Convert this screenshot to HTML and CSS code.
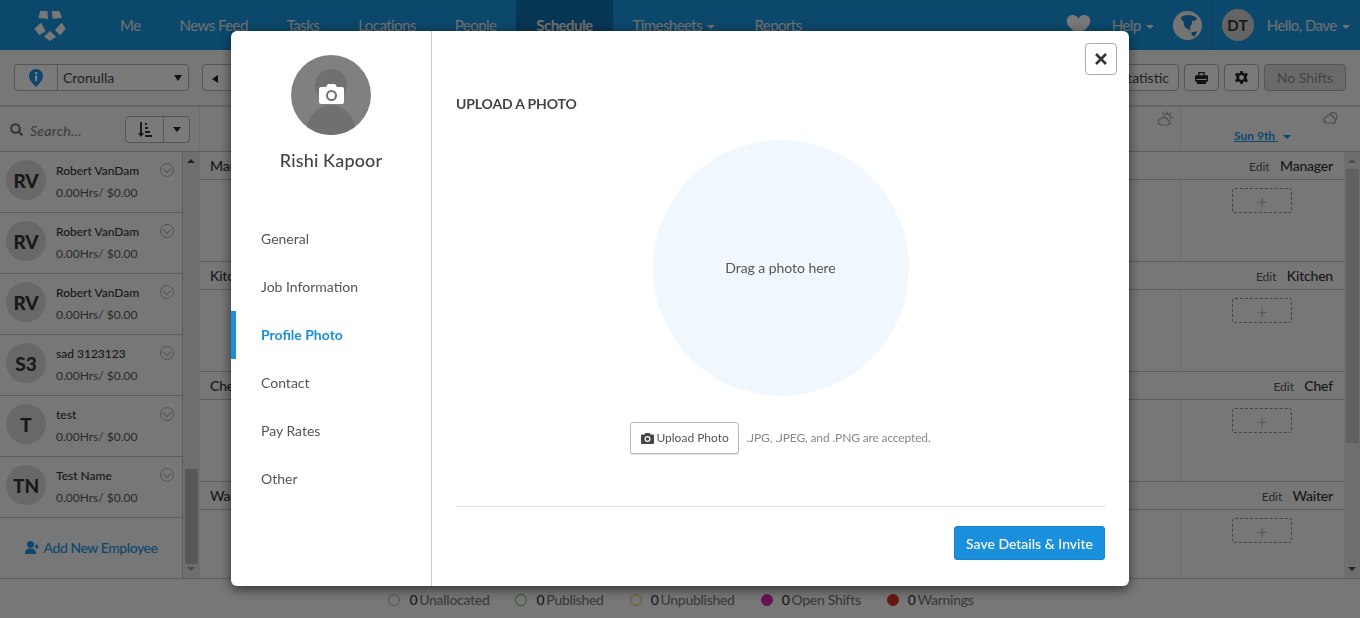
FILE: index.html
```html
<!DOCTYPE html>
<html lang="en">

<head>
    <meta charset="UTF-8">
    <meta name="viewport" content="width=device-width, initial-scale=1.0">
    <title>Schedule</title>
    <link rel="stylesheet" href="styles.css">
</head>

<body>
    <div class="page">
        <header class="topbar">
            <svg class="logo" width="32" height="30" viewBox="0 0 32 30">
                <polygon points="6,0 13.500,0 14,8 4.500,7" />
                <polygon points="17.700,0 25.300,0 28,6.700 18.700,7.700" />
                <polygon points="0.300,17.700 7,11.700 11.700,20 5.300,24.300" />
                <polygon points="21,19 27.700,11.700 31.700,17.700 26,24.300" />
                <polygon points="16,20 22,25.700 16,30 10,25.700" />
            </svg>
            <nav class="mainnav">
                <a>Me</a>
                <a>News Feed</a>
                <a>Tasks</a>
                <a>Locations</a>
                <a>People</a>
                <a class="active">Schedule</a>
                <a>Timesheets <i class="caret"></i></a>
                <a>Reports</a>
            </nav>
            <div class="topright">
                <svg class="heart" width="25" height="20" viewBox="0 0 26 22">
                    <path d="M13 22 C9 18 0 13 0 6.500 C0 2.500 3 0 6.500 0 C9.500 0 11.800 1.500 13 4 C14.200 1.500 16.500 0 19.500 0 C23 0 26 2.500 26 6.500 C26 13 17 18 13 22Z" />
                </svg>
                <a class="help">Help <i class="caret"></i></a>
                <svg class="globe" width="29" height="29" viewBox="0 0 30 30">
                    <circle cx="15" cy="15" r="15" fill="#e8e8e8" />
                    <path d="M8 7 C11 3 21 3 25 8 C23 10 21 11 19 9.500 L20 13 C18 15 17 17 18 20 C14 18.500 11 16 11 13 C12.500 10.500 8.500 10.500 8 7Z M19 22 L25 21 L22.500 26.500 L19.500 25Z" fill="#147fc4" />
                </svg>
                <div class="userbox">
                    <span class="useravatar">DT</span>
                    <a class="hello">Hello, Dave <i class="caret"></i></a>
                </div>
            </div>
        </header>

        <div class="toolbar">
            <div class="locpick">
                <span class="locinfo">
                    <svg width="14" height="18" viewBox="0 0 14 18">
                        <path d="M7 0 C11 0 14 3 14 7 C14 11 10 15 7 18 C4 15 0 11 0 7 C0 3 3 0 7 0Z" fill="#1a8fdc" />
                        <rect x="6" y="3" width="2.200" height="2.200" fill="#fff" />
                        <rect x="6" y="6.500" width="2.200" height="5.500" fill="#fff" />
                    </svg>
                </span>
                <span class="locname">Cronulla</span>
                <i class="tri"></i>
            </div>
            <button class="btn prev"><i class="tri left"></i></button>
            <div class="toolright">
                <button class="btn">Statistic</button>
                <button class="btn icon">
                    <svg width="13" height="12" viewBox="0 0 14 13" fill="#222">
                        <path fill-rule="evenodd" d="M3.500 0 H10.500 V3.500 H13 Q14 3.500 14 4.500 V9.500 Q14 10.500 13 10.500 H12 V13 H2 V10.500 H1 Q0 10.500 0 9.500 V4.500 Q0 3.500 1 3.500 H3.500Z M4.800 1.300 V3.500 H9.200 V1.300Z M1.500 7.500 V8.700 H12.500 V7.500Z" />
                    </svg>
                </button>
                <button class="btn icon">
                    <svg width="13" height="13" viewBox="0 0 24 24" fill="#222">
                        <path fill-rule="evenodd" d="M10 0 H14 L15 3.500 L18 4.800 L21 3 L24 7 L21.300 9.500 L21.700 12 L21.300 14.500 L24 17 L21 21 L18 19.200 L15 20.500 L14 24 H10 L9 20.500 L6 19.200 L3 21 L0 17 L2.700 14.500 L2.300 12 L2.700 9.500 L0 7 L3 3 L6 4.800 L9 3.500Z M12 7.500 A4.500 4.500 0 1 0 12 16.500 A4.500 4.500 0 1 0 12 7.500Z" />
                    </svg>
                </button>
                <button class="btn muted">No Shifts</button>
            </div>
        </div>

        <div class="workarea">
            <aside class="sidebar">
                <div class="searchrow">
                    <svg width="13" height="13" viewBox="0 0 13 13" fill="none" stroke="#666" stroke-width="2">
                        <circle cx="5.500" cy="5.500" r="4.300" />
                        <path d="M8.500 8.500 L12.500 12.500" />
                    </svg>
                    <span class="searchtext">Search...</span>
                    <div class="sortbtn">
                        <span class="sorticon">
                            <svg width="14" height="15" viewBox="0 0 14 15" fill="#333">
                                <path d="M2 0 H4 V11 H6 L3 15 L0 11 H2Z M7 1 H9 V3 H7Z M7 5 H10 V7 H7Z M7 9 H12 V11 H7Z M7 13 H14 V15 H7Z" />
                            </svg>
                        </span>
                        <span class="sortcaret"><i class="tri"></i></span>
                    </div>
                </div>
                <div class="sidelist">
                    <div class="emps">
                        <div class="emp">
                            <span class="empavatar">RV</span>
                            <div class="empinfo"><b>Robert VanDam</b><span>0.00Hrs/ $0.00</span></div>
                            <i class="empmenu"></i>
                        </div>
                        <div class="emp">
                            <span class="empavatar">RV</span>
                            <div class="empinfo"><b>Robert VanDam</b><span>0.00Hrs/ $0.00</span></div>
                            <i class="empmenu"></i>
                        </div>
                        <div class="emp">
                            <span class="empavatar">RV</span>
                            <div class="empinfo"><b>Robert VanDam</b><span>0.00Hrs/ $0.00</span></div>
                            <i class="empmenu"></i>
                        </div>
                        <div class="emp">
                            <span class="empavatar">S3</span>
                            <div class="empinfo"><b>sad 3123123</b><span>0.00Hrs/ $0.00</span></div>
                            <i class="empmenu"></i>
                        </div>
                        <div class="emp">
                            <span class="empavatar">T</span>
                            <div class="empinfo"><b>test</b><span>0.00Hrs/ $0.00</span></div>
                            <i class="empmenu"></i>
                        </div>
                        <div class="emp">
                            <span class="empavatar">TN</span>
                            <div class="empinfo"><b>Test Name</b><span>0.00Hrs/ $0.00</span></div>
                            <i class="empmenu"></i>
                        </div>
                        <a class="addemp">
                            <svg width="14" height="13" viewBox="0 0 14 13" fill="#1a8fdc">
                                <path d="M5.500 0 A3.300 3.300 0 0 1 5.500 7 A3.300 3.300 0 0 1 5.500 0Z M0 13 C0 9 2 7.500 5.500 7.500 C9 7.500 11 9 11 13Z M11 3 H12.200 V5 H14 V6.200 H12.200 V8 H11 V6.200 H9.500 V5 H11Z" />
                            </svg>
                            Add New Employee
                        </a>
                    </div>
                    <div class="scrolltrack sidescroll">
                        <i class="arrowup"></i>
                        <span class="thumb"></span>
                        <i class="arrowdown"></i>
                    </div>
                </div>
            </aside>

            <main class="roster">
                <div class="dayhead">
                    <div class="daycol satcol">
                        <svg class="weather" width="16" height="15" viewBox="0 0 16 15" fill="none" stroke="#999" stroke-width="1.200">
                            <path d="M3 14 H9 A2.500 2.500 0 0 0 9.500 9 A3.500 3.500 0 0 0 3.500 7.500 A3.300 3.300 0 0 0 3 14Z" />
                            <path d="M5.500 5 A3.500 3.500 0 0 1 12 8 M9 0.500 V2.500 M13 2 L11.800 3.500 M15.500 6.500 H13.500 M4.500 1.500 L5.500 3" />
                        </svg>
                    </div>
                    <div class="daycol suncol">
                        <svg class="weather" width="15" height="13" viewBox="0 0 15 13" fill="none" stroke="#999" stroke-width="1.200">
                            <path d="M3.500 12 H10 A2.500 2.500 0 0 0 10.500 7 A3.500 3.500 0 0 0 4 5.500 A3.300 3.300 0 0 0 3.500 12Z" />
                            <path d="M6.500 3 A3.800 3.800 0 1 1 13 8.500" />
                        </svg>
                        <a class="daylink"><u>Sun 9th </u><i class="caret blue"></i></a>
                    </div>
                </div>
                <div class="rosterbody">
                    <div class="sections">
                        <section class="team">
                            <div class="teamhead"><span class="teamname">Manager</span><span class="teamright"><small>Edit</small> Manager</span></div>
                            <div class="teamrow"><div class="slot"><span class="addshift">+</span></div></div>
                        </section>
                        <section class="team">
                            <div class="teamhead"><span class="teamname">Kitchen</span><span class="teamright"><small>Edit</small> Kitchen</span></div>
                            <div class="teamrow"><div class="slot"><span class="addshift">+</span></div></div>
                        </section>
                        <section class="team">
                            <div class="teamhead"><span class="teamname">Chef</span><span class="teamright"><small>Edit</small> Chef</span></div>
                            <div class="teamrow"><div class="slot"><span class="addshift">+</span></div></div>
                        </section>
                        <section class="team">
                            <div class="teamhead"><span class="teamname">Waiter</span><span class="teamright"><small>Edit</small> Waiter</span></div>
                            <div class="teamrow"><div class="slot"><span class="addshift">+</span></div></div>
                        </section>
                    </div>
                    <div class="scrolltrack mainscroll">
                        <i class="arrowup"></i>
                        <span class="thumb"></span>
                        <i class="arrowdown"></i>
                    </div>
                </div>
            </main>
        </div>

        <footer class="legend">
            <span class="legenditem"><i class="dot grey"></i><b>0</b> Unallocated</span>
            <span class="legenditem"><i class="dot green"></i><b>0</b> Published</span>
            <span class="legenditem"><i class="dot yellow"></i><b>0</b> Unpublished</span>
            <span class="legenditem"><i class="dot pink"></i><b>0</b> Open Shifts</span>
            <span class="legenditem"><i class="dot red"></i><b>0</b> Warnings</span>
        </footer>
    </div>

    <div class="overlay"></div>

    <div class="modal">
        <div class="modalside">
            <div class="photo">
                <svg width="80" height="80" viewBox="0 0 80 80">
                    <clipPath id="photoclip">
                        <circle cx="40" cy="40" r="40" />
                    </clipPath>
                    <g clip-path="url(#photoclip)">
                        <rect width="80" height="80" fill="#808080" />
                        <circle cx="40" cy="30" r="16" fill="#707070" />
                        <ellipse cx="40" cy="78" rx="25" ry="28" fill="#707070" />
                    </g>
                    <path fill="#fff" fill-rule="evenodd" d="M30 32 H35 L37 29 H44 L46 32 H51 Q53 32 53 34 V47 Q53 49 51 49 H30 Q28 49 28 47 V34 Q28 32 30 32Z M40.500 35 A5.500 5.500 0 1 0 40.500 46 A5.500 5.500 0 1 0 40.500 35Z M40.500 37 A3.500 3.500 0 1 1 40.500 44 A3.500 3.500 0 1 1 40.500 37Z" />
                </svg>
            </div>
            <h2 class="personname">Rishi Kapoor</h2>
            <ul class="modalnav">
                <li>General</li>
                <li>Job Information</li>
                <li class="active">Profile Photo</li>
                <li>Contact</li>
                <li>Pay Rates</li>
                <li>Other</li>
            </ul>
        </div>
        <div class="modalmain">
            <button class="closebtn">
                <svg width="12" height="12" viewBox="0 0 12 12" stroke="#333" stroke-width="2.600">
                    <path d="M1 1 L11 11 M11 1 L1 11" />
                </svg>
            </button>
            <h3 class="paneltitle">UPLOAD A PHOTO</h3>
            <div class="dropzone">Drag a photo here</div>
            <div class="uploadrow">
                <button class="uploadbtn">
                    <svg width="13" height="11" viewBox="0 0 13 11" fill="#444">
                        <path fill-rule="evenodd" d="M1 1.500 H3.500 L4.500 0 H8.500 L9.500 1.500 H12 Q13 1.500 13 2.500 V10 Q13 11 12 11 H1 Q0 11 0 10 V2.500 Q0 1.500 1 1.500Z M6.500 3 A3 3 0 1 0 6.500 9 A3 3 0 1 0 6.500 3Z M6.500 4.200 A1.800 1.800 0 1 1 6.500 7.800 A1.800 1.800 0 1 1 6.500 4.200Z" />
                    </svg>
                    <span>Upload Photo</span>
                </button>
                <span class="uploadnote">.JPG, .JPEG, and .PNG are accepted.</span>
            </div>
            <div class="modalfoot">
                <button class="savebtn">Save Details &amp; Invite</button>
            </div>
        </div>
    </div>
</body>

</html>
```

FILE: styles.css
```css
* {
    box-sizing: border-box;
}

html,
body {
    height: 100%;
}

body {
    margin: 0;
    overflow: hidden;
    font-family: Lato, "Open Sans", sans-serif;
    font-size: 14px;
    color: #444;
    background-color: #eee;
}

button {
    font-family: inherit;
}

.page {
    display: flex;
    flex-direction: column;
    height: 618px;
}

.caret {
    display: inline-block;
    width: 0;
    height: 0;
    margin-left: 2px;
    vertical-align: middle;
    border-top: 4px solid currentColor;
    border-left: 4px solid transparent;
    border-right: 4px solid transparent;
}

.caret.blue {
    margin-left: 5px;
    color: #1a8fdc;
}

.tri {
    display: inline-block;
    width: 0;
    height: 0;
    border-top: 6px solid #222;
    border-left: 4px solid transparent;
    border-right: 4px solid transparent;
}

.tri.left {
    border-top: 4px solid transparent;
    border-bottom: 4px solid transparent;
    border-right: 6px solid #222;
    border-left: 0;
}

/* top bar */
.topbar {
    display: flex;
    align-items: stretch;
    flex: 0 0 50px;
    background-color: #1890d8;
    color: #e0e0e0;
    font-size: 15px;
    letter-spacing: -0.55px;
}

.logo {
    align-self: flex-start;
    margin: 11px 0 0 34px;
    fill: #f0f0f0;
}

.mainnav {
    display: flex;
    margin-left: 34.500px;
}

.mainnav a {
    padding: 16px 19.500px 0;
    white-space: nowrap;
}

.mainnav a.active {
    width: 97px;
    padding: 16px 0 0;
    font-weight: bold;
    text-align: center;
    background-color: #0f6aa8;
}

.topright {
    display: flex;
    align-items: center;
    margin-left: auto;
}

.heart {
    fill: #f0f0f0;
    margin-right: 21px;
}

.help {
    margin-right: 19px;
}

.userbox {
    display: flex;
    align-items: center;
    height: 50px;
    margin-left: 9px;
    padding: 0 10px 0 10px;
    border-left: 1px solid #1780c2;
}

.useravatar {
    display: flex;
    align-items: center;
    justify-content: center;
    width: 32px;
    height: 32px;
    margin-right: 13px;
    border-radius: 50%;
    background-color: #c8c8c8;
    color: #333;
    font-size: 15px;
    font-weight: bold;
    letter-spacing: 0.5px;
}

/* toolbar */
.toolbar {
    display: flex;
    align-items: center;
    flex: 0 0 57px;
    padding: 0 14px;
    border-bottom: 2px solid #ccc;
}

.locpick {
    display: flex;
    align-items: center;
    width: 175px;
    height: 27px;
    border: 1px solid #aaa;
    border-radius: 4px;
    background-color: #f4f4f4;
}

.locinfo {
    display: flex;
    align-items: center;
    justify-content: center;
    width: 43px;
    height: 100%;
    border-right: 1px solid #aaa;
}

.locname {
    flex: 1;
    padding-left: 5px;
    color: #444;
}

.locpick .tri {
    margin-right: 6px;
}

.btn {
    height: 27px;
    padding: 0 9px;
    border: 1px solid #aaa;
    border-radius: 4px;
    background-color: #f4f4f4;
    color: #444;
    font-size: 14px;
}

.btn.prev {
    margin-left: 13px;
    width: 40px;
    text-align: left;
}

.btn.icon {
    display: flex;
    align-items: center;
    justify-content: center;
    width: 35px;
    padding: 0;
}

.btn.muted {
    width: 82px;
    padding: 0;
    background-color: #d5d5d5;
    color: #888;
}

.toolright {
    display: flex;
    gap: 5px;
    margin-left: auto;
}

/* left column and roster */
.workarea {
    display: flex;
    flex: 1;
    min-height: 0;
}

.sidebar {
    display: flex;
    flex-direction: column;
    flex: 0 0 200px;
    border-right: 1px solid #ddd;
}

.searchrow {
    display: flex;
    align-items: center;
    flex: 0 0 45px;
    padding: 0 9px 0 10px;
    border-bottom: 1px solid #bbb;
}

.searchtext {
    margin-left: 7px;
    padding-top: 2px;
    font-size: 14px;
    font-style: italic;
    letter-spacing: 0.3px;
    color: #777;
}

.sortbtn {
    display: flex;
    height: 27px;
    margin-left: auto;
    border: 1px solid #aaa;
    border-radius: 4px;
    background-color: #f4f4f4;
}

.sorticon {
    display: flex;
    align-items: center;
    justify-content: center;
    width: 38px;
    border-right: 1px solid #aaa;
}

.sortcaret {
    display: flex;
    align-items: center;
    justify-content: center;
    width: 25px;
}

.sortcaret .tri {
    border-top-width: 5px;
}

.sidelist {
    display: flex;
    flex: 1;
    min-height: 0;
}

.emps {
    display: flex;
    flex-direction: column;
    flex: 1;
    border-right: 1px solid #bbb;
}

.emp {
    position: relative;
    display: flex;
    align-items: flex-start;
    flex: 0 0 61px;
    padding: 8px 0 0 6px;
    border-bottom: 1px solid #bbb;
}

.empavatar {
    display: flex;
    align-items: center;
    justify-content: center;
    flex: 0 0 40px;
    height: 40px;
    border-radius: 50%;
    background-color: #d0d0d0;
    color: #333;
    font-size: 19px;
    font-weight: 900;
}

.empinfo {
    display: flex;
    flex-direction: column;
    gap: 6px;
    margin-left: 10px;
    font-size: 12px;
    line-height: 16px;
    color: #555;
}

.empinfo b {
    font-weight: 500;
    color: #333;
    margin-top: 3px;
}

.empmenu {
    position: absolute;
    top: 11px;
    right: 8px;
    width: 14px;
    height: 14px;
    border: 1px solid #aaa;
    border-radius: 50%;
}

.empmenu::after {
    content: "";
    position: absolute;
    left: 3px;
    top: 1.500px;
    width: 5px;
    height: 5px;
    border-right: 1.500px solid #aaa;
    border-bottom: 1.500px solid #aaa;
    transform: rotate(45deg);
}

.addemp {
    display: flex;
    align-items: center;
    justify-content: center;
    gap: 5px;
    flex: 1;
    padding-bottom: 1px;
    color: #1a8fdc;
    font-size: 14px;
    font-weight: 500;
    letter-spacing: -0.45px;
}

.scrolltrack {
    display: flex;
    flex-direction: column;
    align-items: center;
    flex: 0 0 16px;
    background-color: #dcdcdc;
    padding: 7px 0;
}

.scrolltrack .thumb {
    width: 13px;
    background-color: #b0b0b0;
}

.arrowup,
.arrowdown {
    width: 0;
    height: 0;
    border-left: 4px solid transparent;
    border-right: 4px solid transparent;
}

.arrowup {
    border-bottom: 4px solid #444;
}

.arrowdown {
    border-top: 4px solid #999;
}

.sidescroll .arrowup {
    margin-bottom: auto;
}

.sidescroll .thumb {
    height: 95px;
    margin: auto 0 3px;
}

.mainscroll .thumb {
    height: 274px;
    margin: 6px 0 auto;
    background-color: #c0c0c0;
}

.mainscroll .arrowup {
    border-bottom-color: #999;
}

.mainscroll .arrowdown {
    border-top-color: #444;
}

.roster {
    display: flex;
    flex-direction: column;
    flex: 1;
    min-width: 0;
}

.dayhead {
    display: flex;
    justify-content: flex-end;
    flex: 0 0 45px;
    padding-right: 16px;
    border-bottom: 1px solid #bbb;
}

.daycol {
    position: relative;
    height: 100%;
}

.satcol {
    width: 100px;
}

.suncol {
    width: 164px;
    border-left: 1px solid #ddd;
}

.weather {
    position: absolute;
    top: 4px;
    right: 6px;
}

.daylink {
    position: absolute;
    left: 53px;
    top: 21px;
    color: #1a8fdc;
    font-size: 12px;
    font-weight: bold;
    white-space: nowrap;
}

.rosterbody {
    display: flex;
    flex: 1;
    min-height: 0;
    overflow: hidden;
}

.sections {
    flex: 1;
    min-width: 0;
}

.team {
    height: 110px;
}

.teamhead {
    display: flex;
    align-items: center;
    justify-content: space-between;
    height: 28px;
    padding: 0 11px 1px 10px;
    border-bottom: 1px solid #bbb;
    color: #333;
    font-size: 14px;
    font-weight: 500;
    letter-spacing: -0.2px;
}

.teamright small {
    margin-right: 7px;
    font-size: 12px;
    font-weight: normal;
    letter-spacing: 0;
    color: #555;
}

.teamrow {
    display: flex;
    justify-content: flex-end;
    height: 82px;
    border-bottom: 1px solid #bbb;
}

.slot {
    width: 164px;
    padding: 8px 0 0 51px;
    border-left: 1px solid #ddd;
}

.addshift {
    display: flex;
    align-items: center;
    justify-content: center;
    width: 60px;
    height: 25px;
    border: 1px dashed #888;
    border-radius: 3px;
    color: #8a94a8;
    font-size: 20px;
    font-weight: 300;
}

/* footer legend */
.legend {
    display: flex;
    align-items: center;
    justify-content: center;
    gap: 26px;
    flex: 0 0 40px;
    padding: 2px 0 0 2px;
    border-top: 1px solid #bbb;
    color: #777;
    font-size: 14px;
    font-weight: 500;
    letter-spacing: -0.3px;
}

.legenditem {
    display: flex;
    align-items: center;
}

.legenditem b {
    margin-right: 2px;
    font-weight: 500;
    color: #333;
}

.dot {
    width: 12px;
    height: 12px;
    margin-right: 9px;
    border: 1.500px solid;
    border-radius: 50%;
}

.dot.grey {
    border-color: #aaa;
}

.dot.green {
    border-color: #5cb85c;
}

.dot.yellow {
    border-color: #e0b030;
}

.dot.pink {
    border-color: #c9289c;
    background-color: #c9289c;
}

.dot.red {
    border-color: #d42a2a;
    background-color: #d42a2a;
}

/* modal */
.overlay {
    position: fixed;
    inset: 0;
    background-color: rgba(0, 0, 0, 0.5);
}

.modal {
    position: fixed;
    left: 231px;
    top: 31px;
    display: flex;
    width: 898px;
    height: 555px;
    border-radius: 6px;
    background-color: #fff;
    box-shadow: 0 3px 12px rgba(0, 0, 0, 0.6);
}

.modalside {
    flex: 0 0 201px;
    border-right: 1px solid #ccc;
}

.photo {
    display: flex;
    justify-content: center;
    padding-top: 24px;
}

.personname {
    margin: 12px 0 0;
    font-size: 18px;
    font-weight: 500;
    letter-spacing: 0.15px;
    line-height: 26px;
    text-align: center;
    color: #444;
}

.modalnav {
    margin: 42px 0 0;
    padding: 0;
    list-style: none;
}

.modalnav li {
    height: 48px;
    padding-left: 30px;
    line-height: 48px;
    color: #555;
}

.modalnav li.active {
    padding-left: 25px;
    border-left: 5px solid #1a8fdc;
    color: #1a8fdc;
    font-weight: bold;
}

.modalmain {
    position: relative;
    flex: 1;
    padding: 0 24px;
}

.closebtn {
    position: absolute;
    top: 12px;
    right: 12px;
    display: flex;
    align-items: center;
    justify-content: center;
    width: 32px;
    height: 32px;
    padding: 0;
    border: 1px solid #aaa;
    border-radius: 4px;
    background-color: #fff;
}

.paneltitle {
    margin: 0;
    padding-top: 64px;
    font-size: 14px;
    font-weight: bold;
    letter-spacing: -0.15px;
    line-height: 18px;
    color: #444;
}

.dropzone {
    display: flex;
    align-items: center;
    justify-content: center;
    width: 256px;
    height: 256px;
    margin: 27px auto 0;
    padding-bottom: 2px;
    border-radius: 50%;
    background-color: #f0f8fe;
    color: #555;
    font-size: 14px;
    letter-spacing: -0.05px;
}

.uploadrow {
    display: flex;
    align-items: center;
    justify-content: center;
    gap: 7px;
    margin-top: 26px;
}

.uploadbtn {
    display: flex;
    align-items: center;
    gap: 2px;
    width: 109px;
    height: 32px;
    padding: 0 0 0 10px;
    border: 1px solid #bbb;
    border-radius: 3px;
    background-color: #fff;
    box-shadow: 0 1px 1px rgba(0, 0, 0, 0.15);
    color: #555;
    font-size: 12px;
    white-space: nowrap;
}

.uploadbtn span {
    padding-bottom: 2px;
}

.uploadnote {
    padding-bottom: 2px;
    font-size: 12px;
    letter-spacing: -0.15px;
    color: #888;
}

.modalfoot {
    display: flex;
    justify-content: flex-end;
    margin-top: 52px;
    padding-top: 19px;
    border-top: 1px solid #ddd;
}

.savebtn {
    width: 151px;
    height: 34px;
    padding: 0;
    border: 1px solid #1682c9;
    border-radius: 3px;
    background-color: #1a8fdc;
    color: #fff;
    font-size: 14px;
    font-weight: 500;
}
```
